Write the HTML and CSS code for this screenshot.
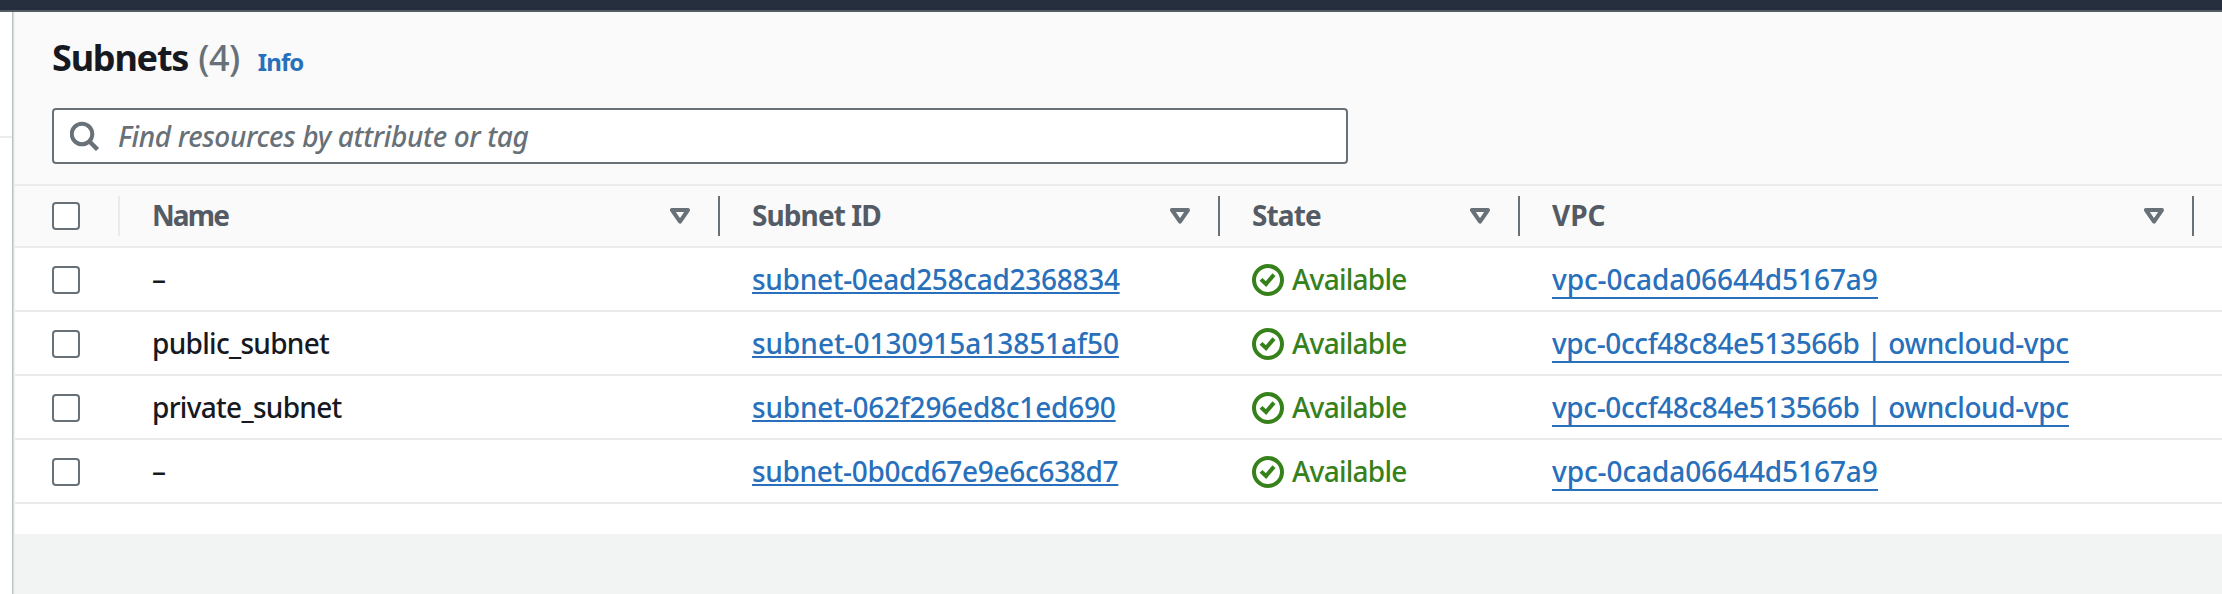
FILE: index.html
```html
<!DOCTYPE html>
<html lang="en">
<head>
<meta charset="utf-8">
<title>Subnets</title>
<link rel="stylesheet" href="styles.css">
</head>
<body>
<svg class="defs" aria-hidden="true">
  <symbol id="sort" viewBox="0 0 20 16"><path d="M2 2h16L10 13.6z" fill="none" stroke="currentColor" stroke-width="4" stroke-linejoin="round"/></symbol>
  <symbol id="ok" viewBox="0 0 32 32"><circle cx="16" cy="16" r="14" fill="none" stroke="currentColor" stroke-width="4"/><path d="M9 15.4l5 4.600 8-9.400" fill="none" stroke="currentColor" stroke-width="4"/></symbol>
</svg>
<div class="topbar"></div>
<div class="shell">
  <aside class="nav"><div class="nav-rule"></div></aside>
  <main class="main">
    <section class="panel">
      <header class="head">
        <h1 class="title"><span class="title-name">Subnets</span><span class="count">(4)</span><a class="info">Info</a></h1>
        <div class="search">
          <svg class="search-icon" viewBox="0 0 30 30"><circle cx="12" cy="13" r="10.3" fill="none" stroke="currentColor" stroke-width="4"/><path d="M19 20l8.500 8.500" stroke="currentColor" stroke-width="4.400"/></svg>
          <span class="placeholder">Find resources by attribute or tag</span>
        </div>
      </header>
      <div class="row columns">
        <div class="cell check-cell light"><span class="check"></span></div>
        <div class="cell"><span class="label t-name">Name</span><svg class="sort"><use href="#sort"/></svg></div>
        <div class="cell"><span class="label t-id">Subnet ID</span><svg class="sort"><use href="#sort"/></svg></div>
        <div class="cell"><span class="label t-state">State</span><svg class="sort"><use href="#sort"/></svg></div>
        <div class="cell"><span class="label">VPC</span><svg class="sort"><use href="#sort"/></svg></div>
      </div>
      <div class="row">
        <div class="cell check-cell"><span class="check"></span></div>
        <div class="cell name">–</div>
        <div class="cell"><a class="subnet s1">subnet-0ead258cad2368834</a></div>
        <div class="cell state"><svg class="ok"><use href="#ok"/></svg><span>Available</span></div>
        <div class="cell"><a class="vpc">vpc-0cada06644d5167a9</a></div>
      </div>
      <div class="row">
        <div class="cell check-cell"><span class="check"></span></div>
        <div class="cell name">public_subnet</div>
        <div class="cell"><a class="subnet s2">subnet-0130915a13851af50</a></div>
        <div class="cell state"><svg class="ok"><use href="#ok"/></svg><span>Available</span></div>
        <div class="cell"><a class="vpc vpc-named">vpc-0ccf48c84e513566b | owncloud-vpc</a></div>
      </div>
      <div class="row">
        <div class="cell check-cell"><span class="check"></span></div>
        <div class="cell name">private_subnet</div>
        <div class="cell"><a class="subnet s3">subnet-062f296ed8c1ed690</a></div>
        <div class="cell state"><svg class="ok"><use href="#ok"/></svg><span>Available</span></div>
        <div class="cell"><a class="vpc vpc-named">vpc-0ccf48c84e513566b | owncloud-vpc</a></div>
      </div>
      <div class="row">
        <div class="cell check-cell"><span class="check"></span></div>
        <div class="cell name">–</div>
        <div class="cell"><a class="subnet s4">subnet-0b0cd67e9e6c638d7</a></div>
        <div class="cell state"><svg class="ok"><use href="#ok"/></svg><span>Available</span></div>
        <div class="cell"><a class="vpc">vpc-0cada06644d5167a9</a></div>
      </div>
    </section>
  </main>
</div>
</body>
</html>
```
FILE: styles.css
```css
* { box-sizing: border-box; }
body {
  margin: 0;
  height: 594px;
  overflow: hidden;
  display: flex;
  flex-direction: column;
  background: #fff;
  color: #16191f;
  font: 500 28px/40px "Noto Sans", sans-serif;
}
.defs { display: none; }
.topbar { height: 12px; flex: none; background: #252f3e; border-bottom: 2px solid #545b64; }
.shell { flex: 1; display: flex; }
.nav { width: 12px; padding-top: 124px; background: #fff; }
.nav-rule { height: 2px; background: #eaeded; }
.main {
  flex: 1;
  min-width: 0;
  padding-left: 3px;
  background: #f2f3f3;
  box-shadow: inset 1px 0 0 #bcc3c5, inset 2px 0 0 #d9dddf, inset 3px 0 0 #f0f2f2;
}
.panel { height: 522px; background: #fff; }
.head {
  height: 174px;
  padding: 22px 37px 0;
  background: #fafafa;
  border-bottom: 2px solid #ebebeb;
}
.title { margin: 0; height: 48px; display: flex; align-items: baseline; font-size: 36px; line-height: 48px; }
.title-name { letter-spacing: -1.200px; }
.count { margin-left: 10px; font-weight: 500; color: #687078; letter-spacing: -.5px; }
.info { margin-left: 18px; font-size: 24px; color: #2870bb; letter-spacing: -.9px; }
.search {
  display: flex;
  align-items: center;
  width: 1296px;
  height: 56px;
  margin-top: 26px;
  padding-left: 16px;
  background: #fff;
  border: 2px solid #687078;
  border-radius: 4px;
}
.search-icon { width: 30px; height: 30px; color: #687078; }
.placeholder { margin-left: 18px; font-style: italic; color: #687078; letter-spacing: -.34px; white-space: nowrap; }
.row {
  display: grid;
  grid-template-columns: 105px 600px 500px 300px 674px;
  height: 64px;
  border-bottom: 2px solid #ebebeb;
}
.cell { display: flex; align-items: center; padding-left: 32px; white-space: nowrap; }
.check-cell { padding: 2px 0 0 37px; }
.check { width: 28px; height: 28px; background: #fff; border: 2px solid #687078; border-radius: 4px; }
.columns { height: 62px; background: #fafafa; color: #545b64; font-weight: 700; }
.columns .cell {
  justify-content: space-between;
  height: 40px;
  margin-top: 10px;
  padding-top: 0;
  padding-right: 28px;
  border-right: 2px solid #687078;
}
.columns .light { border-color: #ebebeb; }
.label { padding-bottom: 2px; }
.sort { width: 20px; height: 16px; color: #687078; }
.t-name { letter-spacing: -1.900px; }
.t-id { letter-spacing: -.9px; }
.t-state { letter-spacing: -.9px; }
.name { letter-spacing: -.7px; }
.subnet { color: #2870bb; text-decoration: underline; text-decoration-thickness: 2px; text-underline-offset: 2px; text-decoration-skip-ink: none; }
.s1 { letter-spacing: -.29px; }
.s2 { letter-spacing: -.05px; }
.s3 { letter-spacing: -.21px; }
.s4 { letter-spacing: -.31px; }
.state { color: #37811a; letter-spacing: -.73px; }
.ok { width: 32px; height: 32px; margin: 2px 8px 0 0; }
.vpc { margin-top: 2px; color: #2870bb; line-height: 36px; border-bottom: 2px solid #2870bb; letter-spacing: -.09px; }
.vpc-named { letter-spacing: -.39px; }
```
